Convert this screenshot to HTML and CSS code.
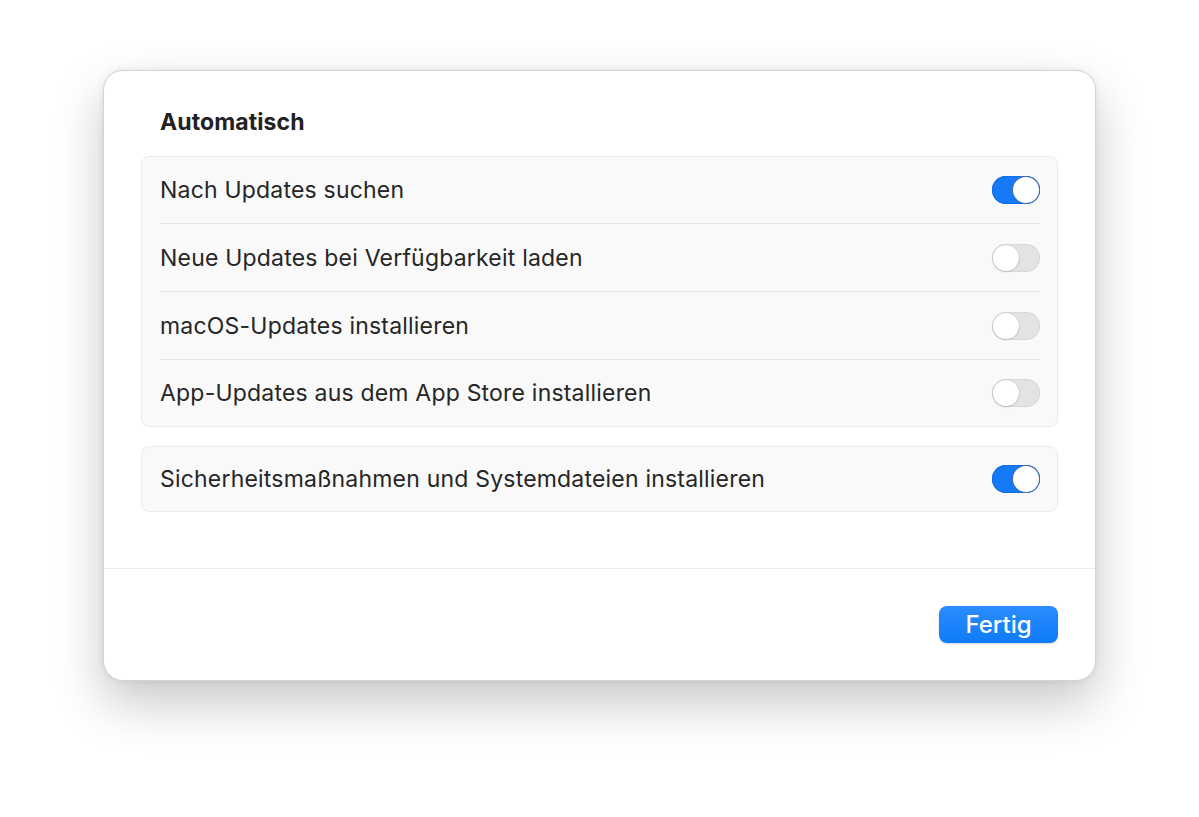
FILE: index.html
```html
<!DOCTYPE html>
<html lang="de">
<head>
<meta charset="utf-8">
<link rel="stylesheet" href="styles.css">
</head>
<body>
<div class="window">
  <div class="content">
    <h2 class="title">Automatisch</h2>
    <div class="group">
      <div class="row"><span>Nach Updates suchen</span><span class="toggle on"></span></div>
      <div class="row"><span>Neue Updates bei Verfügbarkeit laden</span><span class="toggle"></span></div>
      <div class="row"><span>macOS-Updates installieren</span><span class="toggle"></span></div>
      <div class="row"><span>App-Updates aus dem App Store installieren</span><span class="toggle"></span></div>
    </div>
    <div class="group single">
      <div class="row"><span>Sicherheitsmaßnahmen und Systemdateien installieren</span><span class="toggle on"></span></div>
    </div>
  </div>
  <div class="footer">
    <button class="btn">Fertig</button>
  </div>
</div>
</body>
</html>
```

FILE: styles.css
```css
html, body {
  margin: 0;
  padding: 0;
  background: #ffffff;
}
body {
  font-family: Inter, "Noto Sans", "Liberation Sans", sans-serif;
  color: #2a2a2a;
  padding: 70px 0 0 103px;
  height: 817px;
  box-sizing: border-box;
  overflow: hidden;
}
.window {
  width: 993px;
  height: 611px;
  box-sizing: border-box;
  background: #ffffff;
  border: 1px solid #d4d4d4;
  border-radius: 20px;
  box-shadow: 0 22px 50px rgba(0,0,0,0.22), 0 0 6px rgba(0,0,0,0.08);
  display: flex;
  flex-direction: column;
}
.content {
  padding: 36px 37px 0 37px;
  height: 498px;
  box-sizing: border-box;
  border-bottom: 1px solid #ececec;
}
.title {
  margin: 0 0 19px 19px;
  font-size: 23px;
  font-weight: 700;
  line-height: 30px;
  color: #222;
  letter-spacing: 0.1px;
}
.group {
  background: #f9f9f9;
  border: 1px solid #ececec;
  border-radius: 8px;
  padding: 0 17px 0 18px;
}
.group.single {
  margin-top: 19px;
}
.row {
  display: flex;
  align-items: center;
  justify-content: space-between;
  height: 67px;
  font-size: 23px;
  letter-spacing: 0.2px;
  color: #262626;
  border-bottom: 1px solid #e7e7e7;
}
.row:first-child {
  height: 66px;
}
.row:last-child {
  border-bottom: none;
  height: 66px;
}
.group.single .row {
  height: 64px;
}
.toggle {
  position: relative;
  width: 48px;
  height: 28px;
  border-radius: 14px;
  background: #e3e3e3;
  box-shadow: inset 0 0 0 1px #d8d8d8;
  flex: none;
}
.toggle::after {
  content: "";
  position: absolute;
  top: 1px;
  left: 1px;
  width: 26px;
  height: 26px;
  border-radius: 50%;
  background: #ffffff;
  box-shadow: 0 0 0 0.5px #c4c4c4, 0 1px 2px rgba(0,0,0,0.15);
}
.toggle.on {
  background: #1679f5;
  box-shadow: inset 0 0 0 1px #0f6ee6;
}
.toggle.on::after {
  left: 21px;
  box-shadow: 0 0 0 1px #4a6fa8;
}
.footer {
  flex: 1;
  display: flex;
  justify-content: flex-end;
  align-items: flex-start;
  padding: 37px 37px 0 0;
}
.btn {
  width: 119px;
  height: 37px;
  border: none;
  border-radius: 8px;
  background: linear-gradient(#2b8cff, #0f7bf7);
  color: #ffffff;
  font-family: Inter, "Noto Sans", "Liberation Sans", sans-serif;
  font-size: 24px;
  font-weight: 500;
  box-shadow: 0 1px 2px rgba(0,0,0,0.15);
  padding: 0;
}
```
